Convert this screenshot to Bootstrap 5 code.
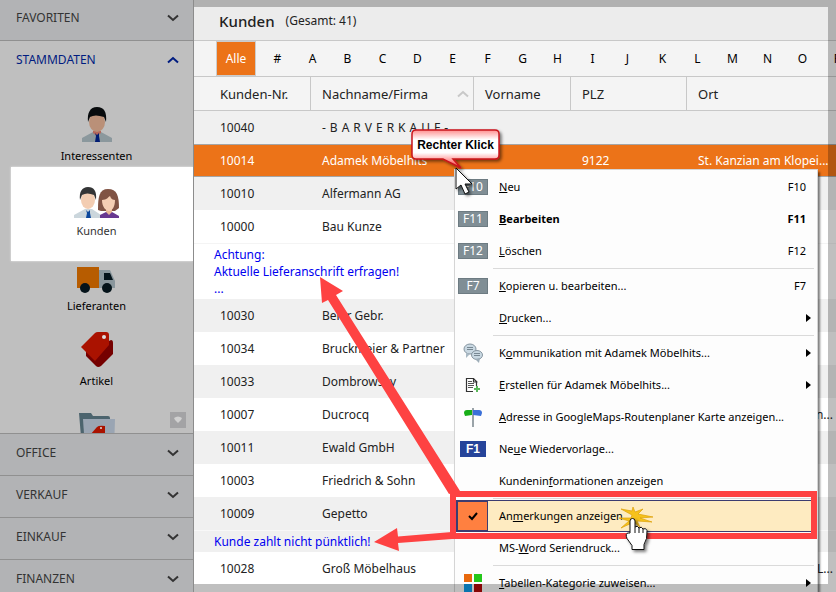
<!DOCTYPE html>
<html lang="de">
<head>
<meta charset="utf-8">
<meta name="viewport" content="width=device-width, initial-scale=1">
<title>Kunden</title>
<link href="https://cdn.jsdelivr.net/npm/bootstrap@5.3.0/dist/css/bootstrap.min.css" rel="stylesheet">
<style>
  body { font-family: "Noto Sans", "Open Sans", sans-serif; font-size: 12px; line-height: 18px; color: #222; background: #ececec; }
  button { font: inherit; color: inherit; border: 0; background: none; padding: 0; }
  .app { height: 100vh; min-height: 592px; }

  .side { flex: 0 0 194px; background: #b2b3b5; border-right: 1px solid #8c8c8c; }
  .side-head { height: 42px; padding: 0 14px 0 16px; border-bottom: 1px solid #909090; color: #333; text-align: left; }
  .side-head.first { height: 41px; }
  .side-body { background: #bfbfbf; height: 393px; border-bottom: 1px solid #909090; }
  .side-head.open { color: #001c80; background: #bfbfbf; border: 0; margin-bottom: 9px; }
  .side-item { height: 75px; color: #000; font-size: 11px; padding-bottom: 2px; gap: 4px; }
  .side-item > * { position: relative; }
  .side-item.last { padding-top: 21px; }
  .side-item.active { color: #333; }
  .side-item.active::before { content: ""; position: absolute; inset: 0 0 -19px 11px; background: #fff; box-shadow: 0 0 2px #eee; }
  .side-more { right: 7px; bottom: 5px; width: 16px; height: 16px; background: #a3a3a5; }

  .content-area { min-width: 0; background: #fff; }
  .shade { inset: 0; border: solid rgba(0,0,0,.25); border-width: 7px 8px 8px 0; pointer-events: none; z-index: 5; }
  .title-bar { height: 41px; padding: 7px 0 5px 25px; background: #ececec; border-bottom: 1px solid #c8c8c8; gap: 11px; }
  .title-bar h1 { font-size: 15px; line-height: 24px; font-weight: 500; margin: 0; }
  .abc { height: 36px; padding: 0 0 0 22px; background: #f4f4f4; border-bottom: 1px solid #c8c8c8; color: #000; }
  .abc button { flex: 0 0 35px; }
  .abc .on { flex: 0 0 40px; margin-right: 4px; background: #ec7318; color: #fff; border: 1px solid #ccc; }

  .grid { width: 100%; table-layout: fixed; border-collapse: separate; border-spacing: 0; white-space: nowrap; }
  .grid th { height: 34px; padding: 0 11px; font-size: 13px; font-weight: 400; background: #f4f4f4; border-bottom: 1px solid #c8c8c8; border-right: 1px solid #c8c8c8; }
  .grid th.sorted { padding-right: 4px; }
  .grid th svg { color: #c8c8c8; }
  .grid td { height: 33px; padding: 0 11px; font-size: 12px; overflow: hidden; }
  .grid th:first-child, .grid td:first-child { padding-left: 26px; }
  .grid th:last-child { border-right: 0; }
  .grid tr.alt td { background: #f0f0f0; }
  .grid tr.sel td { background: #ec7318; color: #fff; border-top: 1px solid #a5a5a5; border-bottom: 1px solid #a5a5a5; }
  .grid tr.remark td { color: #0000f0; height: 56px; line-height: 17px; padding: 2px 0 0 20px; border-top: 1px solid #f4f4f4; vertical-align: top; }
  .grid tr.remark.one td { height: 22px; border-top-color: #f8f8f8; }
  .grid td.cut { padding-right: 3px; text-align: right; }

  .ctx { left: 260px; top: 169px; width: 364px; padding: 1px 0; background: #fdfdfd; border: 1px solid #d5d5d5; box-shadow: 2px 3px 2px rgba(0,0,0,.5); font-size: 11px; white-space: nowrap; color: #000; z-index: 3; }
  .ctx .entry { width: 100%; height: 32px; padding-right: 11px; text-align: left; }
  .ctx .entry.sub { padding-right: 6px; }
  .ctx .pic { flex: 0 0 36px; margin-right: 8px; height: 32px; }
  .ctx hr { height: 1px; margin: 1px 3px 1px 38px; border: 0; background: #dadada; opacity: 1; }
  .key { width: 30px; height: 16px; font-size: 12px; line-height: 14px; text-align: center; color: #fff; background: #808e95; border: 1px solid #6d7b82; }
  .key.blue { width: 26px; background: #26449a; border-color: #26449a; font: bold 12px/14px "Liberation Sans", sans-serif; }
  .ctx .entry.hot { background: #feebc1; border: 1px solid #3c3c70; margin: 0 3px 0 1px; width: 357px; }
  .ctx .hot .pic { flex-basis: 31px; height: 30px; margin: 0 11px 0 0; background: #ff8040; border: 1px solid #3c3c70; }
  .notes { left: 0; top: 0; z-index: 4; pointer-events: none; }
  .notes text { font: bold 12px "Liberation Sans", sans-serif; }
</style>
<script src="https://cdn.jsdelivr.net/npm/bootstrap@5.3.0/dist/js/bootstrap.bundle.min.js"></script>
</head>
<body class="overflow-hidden">
<svg class="d-none" aria-hidden="true">
  <symbol id="down" viewBox="0 0 12 8"><path d="M1 1.500 6 6l5-4.500" fill="none" stroke="currentColor" stroke-width="2"/></symbol>
  <symbol id="up" viewBox="0 0 12 8"><path d="M1 6.500 6 2l5 4.500" fill="none" stroke="currentColor" stroke-width="2"/></symbol>
</svg>
<div class="app d-flex overflow-hidden">
  <nav class="side d-flex flex-column overflow-hidden">
    <button class="side-head first d-flex align-items-center justify-content-between flex-shrink-0 pb-1">FAVORITEN<svg width="12" height="8"><use href="#down"/></svg></button>
    <div class="side-body flex-shrink-0 d-flex flex-column position-relative overflow-hidden">
      <button class="side-head open flex-shrink-0 d-flex align-items-center justify-content-between pb-1">STAMMDATEN<svg width="12" height="8"><use href="#up"/></svg></button>
      <button class="side-item flex-shrink-0 position-relative d-flex flex-column align-items-center justify-content-end">
        <svg width="30" height="36" viewBox="0 0 30 36">
          <path d="M0 35v-4l11-6h8l11 6v4z" fill="#8b989d"/><path d="M11 24h8v2l-4 3-4-3z" fill="#b5685a"/><path d="m13 26 2 2 2-2v3l1 6h-5l1-6z" fill="#001c73"/>
          <ellipse cx="15" cy="15" rx="8" ry="10" fill="#ba9078"/><path d="M6 15C5 6 8 0 15 0s10 5 9 15l-2-5q-9-3-14 0z" fill="#080b0d"/>
        </svg><span>Interessenten</span>
      </button>
      <button class="side-item active flex-shrink-0 position-relative d-flex flex-column align-items-center justify-content-end">
        <svg width="46" height="31" viewBox="0 0 46 31">
          <path d="M0 31v-3l11-6h7l9 6v3z" fill="#cbd6dc"/><path d="m12 23 2 2 2-2v3l1 5h-5l1-5z" fill="#0b479c"/><ellipse cx="14" cy="13" rx="7" ry="9" fill="#f3cdb2"/><path d="M6 13C5 5 8 0 14 0s9 4 8 13l-2-5q-7-3-12 0z" fill="#343536"/>
          <path d="M24 23C24 10 25 2 34 2s11 7 11 19l-4 3H27z" fill="#805344"/><path d="M26 31v-3l6-3h6l7 4v2z" fill="#683890"/><path d="M32 21h6v4l-3 3-3-3z" fill="#eab894"/><path d="M28 13c5 0 6-3 8-4 1 3 3 4 5 4 0 7-3 11-6 11s-7-4-7-11z" fill="#f4ceb4"/>
        </svg><span>Kunden</span>
      </button>
      <button class="side-item flex-shrink-0 position-relative d-flex flex-column align-items-center justify-content-end">
        <svg width="40" height="27" viewBox="0 0 40 27">
          <path d="M0 1h22v21H0z" fill="#b75c00"/><path d="M22 4h11l5 11v7H22z" fill="#89969c"/><path d="M27 7h6l3 7h-9z" fill="#04131a"/><circle cx="8" cy="22" r="5" fill="#04131a"/><circle cx="30" cy="22" r="5" fill="#04131a"/>
        </svg><span>Lieferanten</span>
      </button>
      <button class="side-item flex-shrink-0 position-relative d-flex flex-column align-items-center justify-content-end">
        <svg width="32" height="36" viewBox="0 0 32 36"><path d="m5 20 25-12q2 0 2 3v11L20 34q-3 2-5 0L5 24z" fill="#750000"/><path d="M0 15 14 1q1-1 3-1h8q3 0 3 3v10L14 29z" fill="#aa1200"/><circle cx="23" cy="5" r="2" fill="#ddd"/></svg><span>Artikel</span>
      </button>
      <button class="side-item last flex-shrink-0 d-flex justify-content-center" aria-label="Artikelgruppen">
        <svg width="38" height="36" viewBox="0 0 38 36"><path d="M1 0h12l2 3h15q2 0 2 2v31H4z" fill="#4c646e"/><path d="M5 6h32l-1 30H7z" fill="#9aa5b3"/><path d="m12 22 7-8q2-2 8-1v12H12z" fill="#aa1200"/><circle cx="23" cy="15" r="1" fill="#ddd"/></svg>
      </button>
      <button class="side-more position-absolute" aria-label="Mehr"><svg width="16" height="16" class="d-block"><path d="M4 6q4-3 8 0l-1 2-3 3-3-3z" fill="#d0d0d0"/></svg></button>
    </div>
    <button class="side-head d-flex flex-shrink-0 align-items-center justify-content-between pb-1">OFFICE<svg width="12" height="8"><use href="#down"/></svg></button>
    <button class="side-head d-flex flex-shrink-0 align-items-center justify-content-between pb-1">VERKAUF<svg width="12" height="8"><use href="#down"/></svg></button>
    <button class="side-head d-flex flex-shrink-0 align-items-center justify-content-between pb-1">EINKAUF<svg width="12" height="8"><use href="#down"/></svg></button>
    <button class="side-head d-flex flex-shrink-0 align-items-center justify-content-between pb-1">FINANZEN<svg width="12" height="8"><use href="#down"/></svg></button>
  </nav>

  <main class="content-area flex-grow-1 position-relative overflow-hidden">
    <header class="title-bar d-flex align-items-center"><h1>Kunden</h1><span>(Gesamt: 41)</span></header>
    <div class="abc d-flex overflow-hidden">
      <button class="on">Alle</button><button>#</button><button>A</button><button>B</button><button>C</button><button>D</button><button>E</button><button>F</button><button>G</button><button>H</button><button>I</button><button>J</button><button>K</button><button>L</button><button>M</button><button>N</button><button>O</button><button>P</button>
    </div>
    <table class="grid">
      <colgroup><col width="117"><col width="163"><col width="97"><col width="116"><col></colgroup>
      <thead><tr><th>Kunden-Nr.</th><th class="sorted"><span class="d-flex justify-content-between align-items-center">Nachname/Firma<svg width="12" height="8"><use href="#up"/></svg></span></th><th>Vorname</th><th>PLZ</th><th>Ort</th></tr></thead>
      <tbody>
        <tr class="alt"><td>10040</td><td>-&#8196;B&#8196;A&#8196;R&#8196;V&#8196;E&#8196;R&#8196;K&#8196;A&#8196;U&#8196;F&#8196;-</td><td></td><td></td><td></td></tr>
        <tr class="sel"><td>10014</td><td>Adamek Möbelhits</td><td></td><td>9122</td><td>St. Kanzian am Klopei...</td></tr>
        <tr class="alt"><td>10010</td><td>Alfermann AG</td><td></td><td></td><td></td></tr>
        <tr><td>10000</td><td>Bau Kunze</td><td></td><td></td><td></td></tr>
        <tr class="remark"><td colspan="5">Achtung:<br>Aktuelle Lieferanschrift erfragen!<br>...</td></tr>
        <tr class="alt"><td>10030</td><td>Beier Gebr.</td><td></td><td></td><td></td></tr>
        <tr><td>10034</td><td>Bruckmeier &amp; Partner</td><td></td><td></td><td></td></tr>
        <tr class="alt"><td>10033</td><td>Dombrowsky</td><td></td><td></td><td></td></tr>
        <tr><td>10007</td><td>Ducrocq</td><td></td><td></td><td class="cut">n...</td></tr>
        <tr class="alt"><td>10011</td><td>Ewald GmbH</td><td></td><td></td><td></td></tr>
        <tr><td>10003</td><td>Friedrich &amp; Sohn</td><td></td><td></td><td></td></tr>
        <tr class="alt"><td>10009</td><td>Gepetto</td><td></td><td></td><td></td></tr>
        <tr class="remark one alt"><td colspan="5">Kunde zahlt nicht pünktlich!</td></tr>
        <tr><td>10028</td><td>Groß Möbelhaus</td><td></td><td></td><td class="cut">L...</td></tr>
      </tbody>
    </table>

    <div class="ctx position-absolute">
      <button class="entry d-flex align-items-center"><span class="pic d-flex align-items-center justify-content-center"><span class="key">F10</span></span><span class="flex-grow-1"><u>N</u>eu</span><span>F10</span></button>
      <button class="entry d-flex align-items-center fw-bold"><span class="pic d-flex align-items-center justify-content-center fw-normal"><span class="key">F11</span></span><span class="flex-grow-1"><u>B</u>earbeiten</span><span>F11</span></button>
      <button class="entry d-flex align-items-center"><span class="pic d-flex align-items-center justify-content-center"><span class="key">F12</span></span><span class="flex-grow-1"><u>L</u>öschen</span><span>F12</span></button>
      <hr>
      <button class="entry d-flex align-items-center"><span class="pic d-flex align-items-center justify-content-center"><span class="key">F7</span></span><span class="flex-grow-1"><u>K</u>opieren u. bearbeiten...</span><span>F7</span></button>
      <button class="entry sub d-flex align-items-center"><span class="pic"></span><span class="flex-grow-1"><u>D</u>rucken...</span><svg width="5" height="8"><path d="M0 0v8l5-4z"/></svg></button>
      <hr>
      <button class="entry sub d-flex align-items-center"><span class="pic d-flex align-items-center justify-content-center"><svg width="20" height="20"><ellipse cx="7" cy="6" rx="6" ry="5" fill="#c9d8e2" stroke="#8695a0"/><path d="m3 10 0 5 4-4" fill="#a9b9c4"/><ellipse cx="14" cy="12" rx="5.500" ry="4.500" fill="#c9d8e2" stroke="#8695a0"/><path d="m12 16 4 4 1-5" fill="#9dadb8"/><path d="M4 4.500h6M4 6.500h6M11 10.500h6M11 12.500h6" stroke="#778792"/></svg></span><span class="flex-grow-1">K<u>o</u>mmunikation mit Adamek Möbelhits...</span><svg width="5" height="8"><path d="M0 0v8l5-4z"/></svg></button>
      <button class="entry sub d-flex align-items-center"><span class="pic d-flex align-items-center justify-content-center"><svg width="16" height="16"><path d="M8 14.500H1.500V1.500h7l3 3V9M8.500 1v4h4" fill="#fff" stroke="#333" stroke-width="1.200"/><path d="M3 4.500h4M3 6.500h6M3 8.500h6M3 10.500h5" stroke="#555"/><path d="M12 9v6M9 12h6" stroke="#5cb85c" stroke-width="2"/></svg></span><span class="flex-grow-1"><u>E</u>rstellen für Adamek Möbelhits...</span><svg width="5" height="8"><path d="M0 0v8l5-4z"/></svg></button>
      <button class="entry d-flex align-items-center"><span class="pic d-flex align-items-center justify-content-center"><svg width="18" height="19"><path d="M8 0h2v19H8z" fill="#9aa3a8"/><path d="M8 2H3Q0 2 0 5l1 3 7-1z" fill="#17ae17"/><path d="M9 2h6q3 0 3 3l-1 3-8-1z" fill="#3b70d8"/></svg></span><span class="flex-grow-1"><u>A</u>dresse in GoogleMaps-Routenplaner Karte anzeigen...</span></button>
      <button class="entry d-flex align-items-center"><span class="pic d-flex align-items-center justify-content-center"><span class="key blue">F1</span></span><span class="flex-grow-1">Ne<u>u</u>e Wiedervorlage...</span></button>
      <button class="entry d-flex align-items-center"><span class="pic"></span><span class="flex-grow-1">Kundenin<u>f</u>ormationen anzeigen</span></button>
      <hr>
      <button class="entry hot d-flex align-items-center"><span class="pic d-flex align-items-center justify-content-center"><svg width="10" height="9"><path d="m1 4 3 3 5-6" fill="none" stroke="#000" stroke-width="2"/></svg></span><span class="flex-grow-1">An<u>m</u>erkungen anzeigen</span></button>
      <button class="entry d-flex align-items-center"><span class="pic"></span><span class="flex-grow-1">MS-<u>W</u>ord Seriendruck...</span></button>
      <hr>
      <button class="entry sub d-flex align-items-center"><span class="pic d-flex align-items-center justify-content-center"><svg width="18" height="18"><path d="M0 0h8v8H0z" fill="#e8680c"/><path d="M10 0h8v8h-8z" fill="#25c71a"/><path d="M0 10h8v8H0z" fill="#0c9be8"/><path d="M10 10h8v8h-8z" fill="#b50808"/></svg></span><span class="flex-grow-1"><u>T</u>abellen-Kategorie zuweisen...</span><svg width="5" height="8"><path d="M0 0v8l5-4z"/></svg></button>
    </div>

    <svg class="notes position-absolute" width="642" height="592" viewBox="194 0 642 592">
      <defs>
        <filter id="soft" x="-30%" y="-30%" width="170%" height="170%"><feDropShadow dx="2" dy="2" stdDeviation="1.500" flood-opacity=".5"/></filter>
        <linearGradient id="glow" x2="0" y2="1"><stop stop-color="#ff8f8f"/><stop offset=".25" stop-color="#fff"/><stop offset=".6" stop-color="#fff"/><stop offset=".8" stop-color="#f99"/><stop offset="1" stop-color="#e33"/></linearGradient>
      </defs>
      <g fill="#fe4242">
        <path d="M320 277 343 291 336 295 460 491 449 494 328 300 322 303z"/>
        <path d="m374 542 23-14 1 8.500 54-4.500v7l-54 4 1 8z"/>
      </g>
      <path d="M453 494h361v42H453z" fill="none" stroke="#fe4242" stroke-width="6"/>
      <path d="M416 130h79q4 0 4 4v21q0 4-4 4h-42l8 9-18-9h-27q-4 0-4-4v-21q0-4 4-4z" fill="url(#glow)" stroke="#c9161c" stroke-width="1.500" filter="url(#soft)"/>
      <text x="455.500" y="149" text-anchor="middle">Rechter Klick</text>
      <path d="M456 168v21l5-4 4 9 4-2-4-8h7z" fill="#fff" stroke="#111" filter="url(#soft)"/>
      <path d="m632 515-11-6 11 2 1-4 2 5 8-3-5 5 15 3-13 1 12 4-15-1 3 6-6-5-13 6 8-7-10-3 12 0z" fill="#f6c21c" stroke="#dca008" stroke-width=".7"/>
      <path d="M630 533V521Q630 518.500 632.500 518.500T635 521v6q2.500-2 4 1 2.500-2 4 1 3-1.500 4 1.500 .5 9-3 14v5h-12v-4l-5-7q-2-5 1-5.500z" fill="#fff" stroke="#111" filter="url(#soft)"/>
      <path d="M635 527v6M639 528v5M643 529v4" stroke="#111"/>
    </svg>
    <div class="shade position-absolute"></div>
  </main>
</div>
</body>
</html>
